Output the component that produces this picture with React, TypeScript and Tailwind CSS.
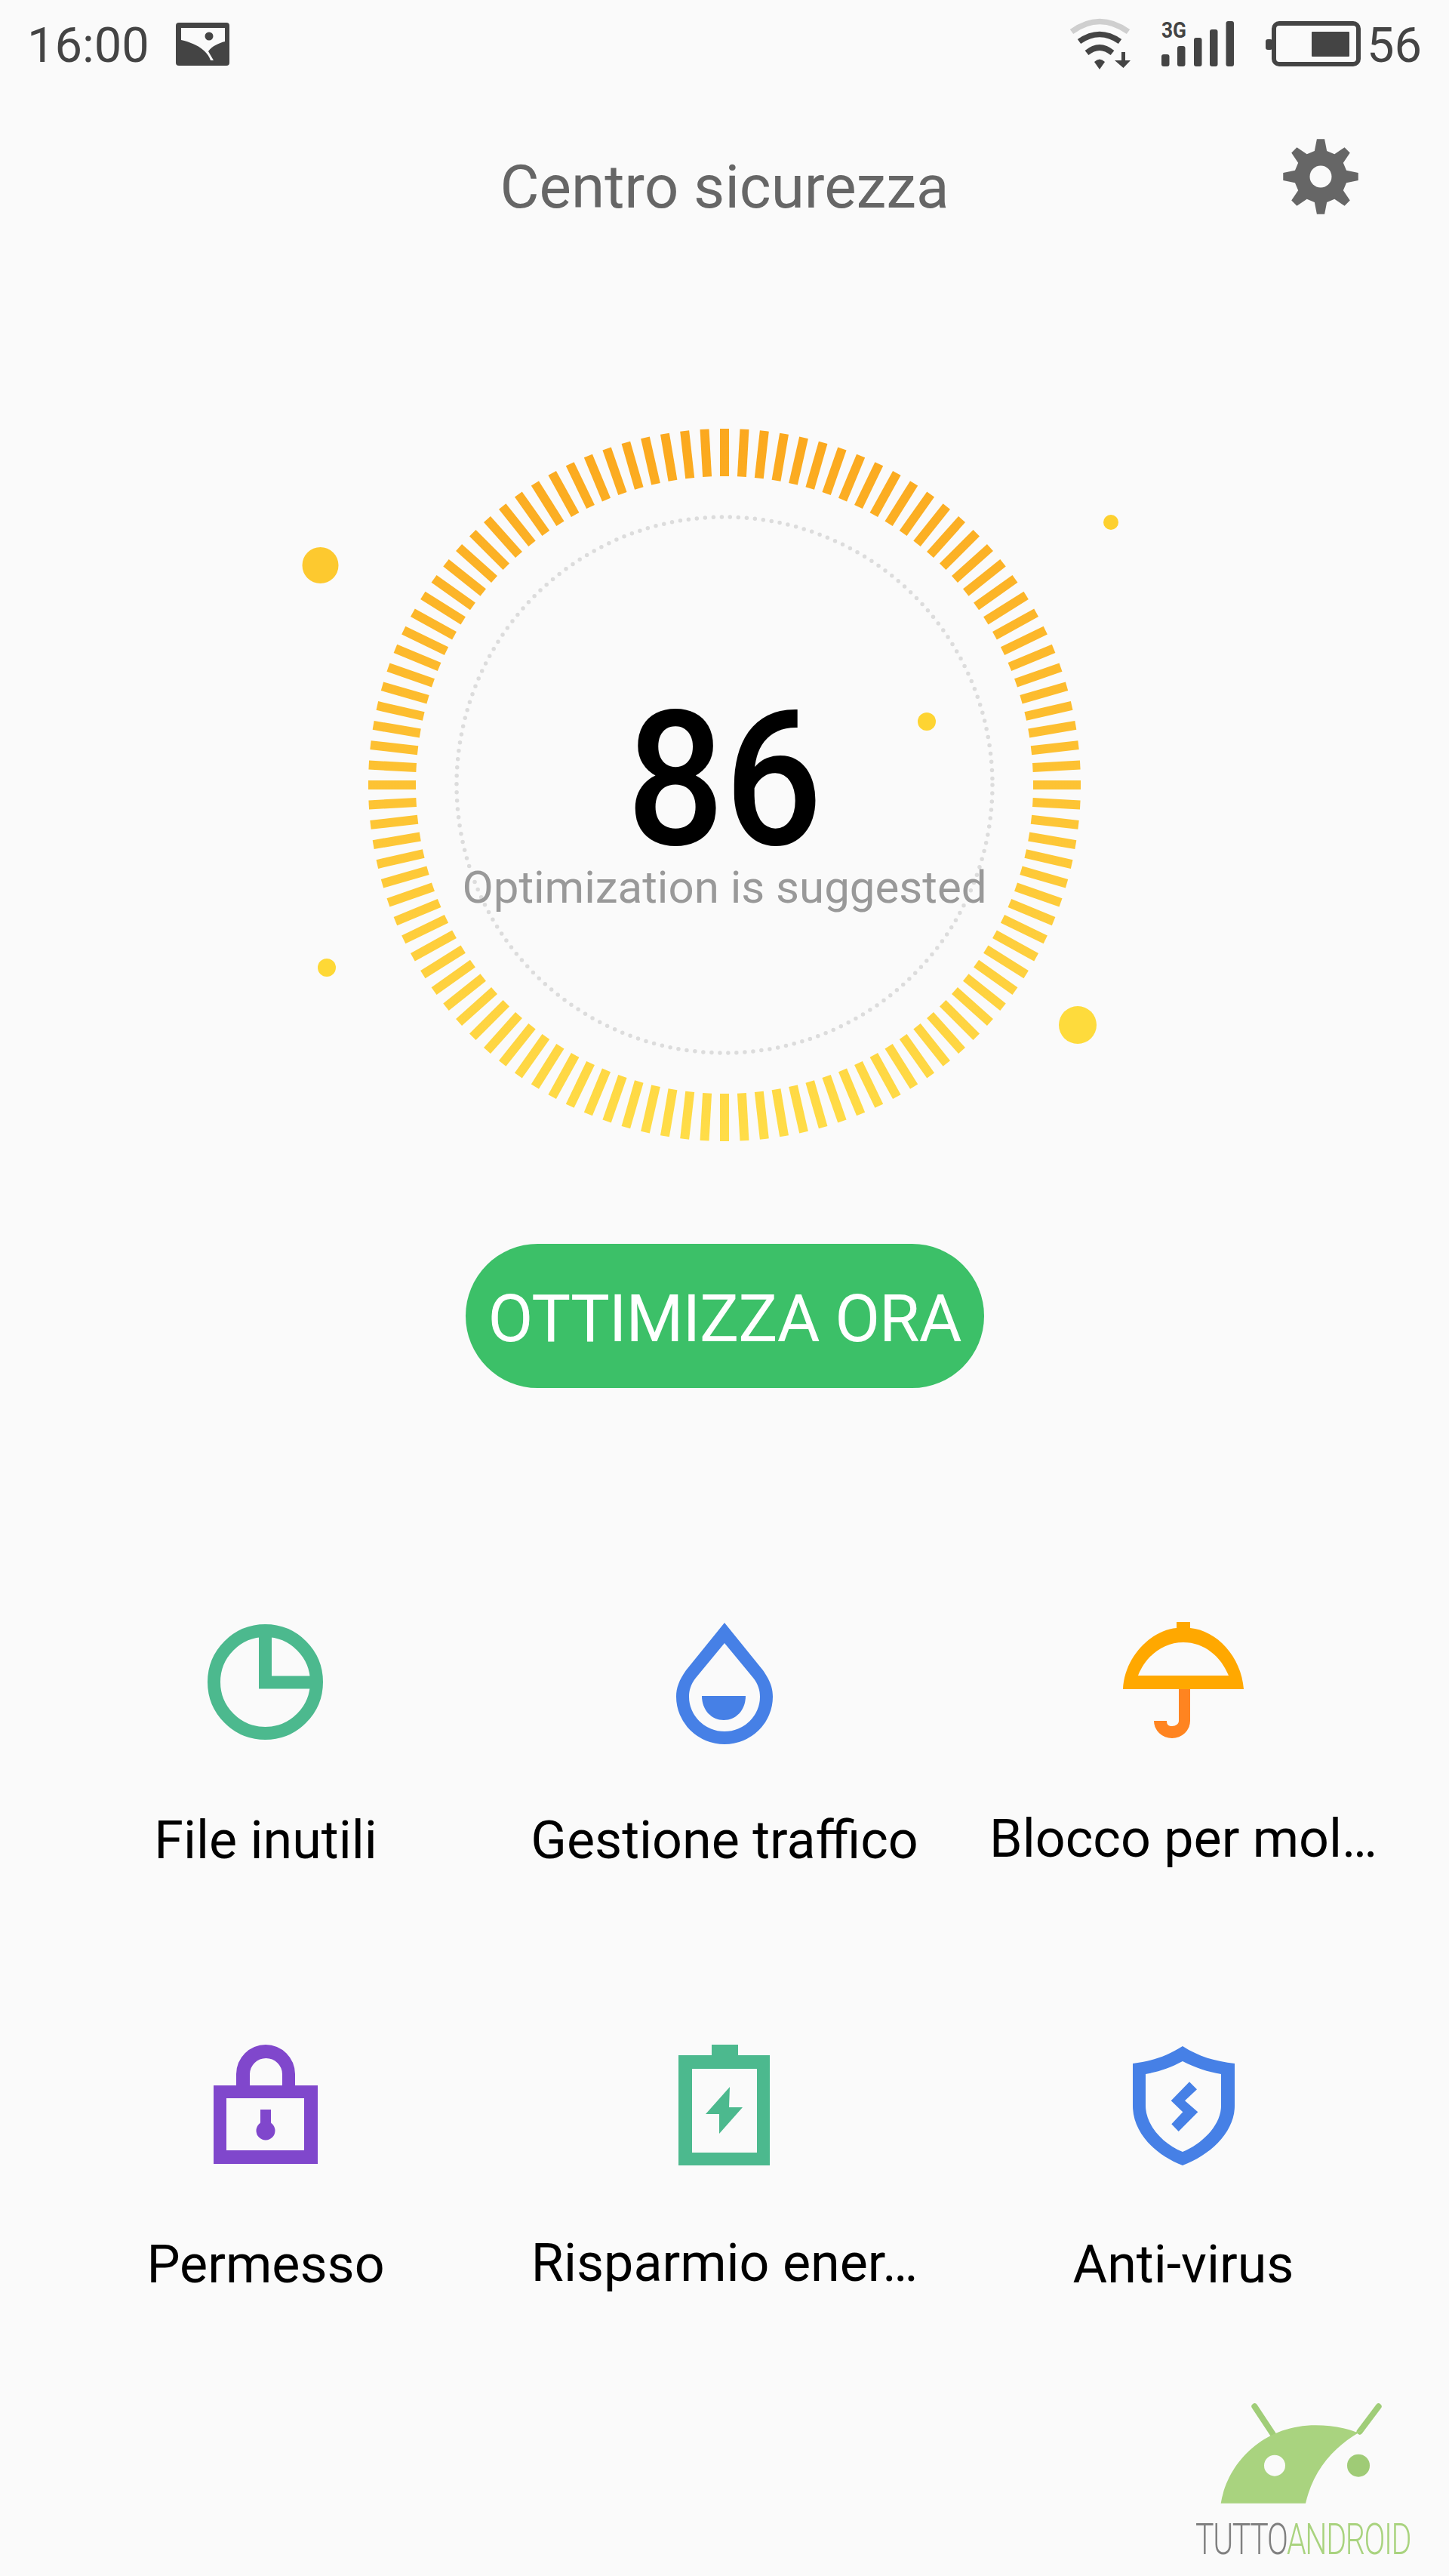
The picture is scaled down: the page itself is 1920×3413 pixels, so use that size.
import React from "react";

const ROBOTO = "font-['Roboto',sans-serif]";

function Ticks() {
  const items = [];
  for (let i = 0; i < 112; i++) {
    const a = (i * 2 * Math.PI) / 112;
    const c = Math.cos(a);
    const s = Math.sin(a);
    items.push(
      <line key={i} x1={960 + 409 * s} y1={1040 - 409 * c} x2={960 + 472 * s} y2={1040 - 472 * c} />
    );
  }
  return (
    <g stroke="url(#ringGrad)" strokeWidth={12}>
      {items}
    </g>
  );
}

function gearPath() {
  const cx = 50, cy = 50, n = 8;
  const pts: string[] = [];
  for (let i = 0; i < n; i++) {
    const a = (i * 2 * Math.PI) / n - Math.PI / 2;
    const d = (2 * Math.PI) / n;
    const add = (r: number, t: number) =>
      pts.push(`${(cx + r * Math.cos(a + t * d)).toFixed(2)} ${(cy + r * Math.sin(a + t * d)).toFixed(2)}`);
    add(35, -0.3);
    add(50, -0.13);
    add(50, 0.13);
    add(35, 0.3);
  }
  return "M" + pts.join("L") + "Z";
}

function Ring() {
  return (
    <svg className="block w-[1920px] h-[1000px]" viewBox="0 540 1920 1000">
      <defs>
        <linearGradient id="ringGrad" gradientUnits="userSpaceOnUse" x1="960" y1="568" x2="960" y2="1512">
          <stop offset="0" stopColor="#fba81e" />
          <stop offset="1" stopColor="#ffdd48" />
        </linearGradient>
      </defs>
      <Ticks />
      <circle cx="960" cy="1040" r="355" fill="none" stroke="#dcdcdc" strokeWidth="5.500" strokeLinecap="round" strokeDasharray="0 11.05" />
      <circle cx="424.5" cy="749" r="24" fill="#fdc92f" />
      <circle cx="1472" cy="692" r="10" fill="#fdd02f" />
      <circle cx="1228" cy="956" r="12" fill="#fed432" />
      <circle cx="433" cy="1282" r="12" fill="#fed836" />
      <circle cx="1428" cy="1358" r="25" fill="#fedb3c" />
    </svg>
  );
}

const G1 = "#4cb98e";
const BLUE = "#4680e6";

function IconFile() {
  return (
    <svg className="w-[180px] h-[180px]" viewBox="262 2140 180 180">
      <circle cx="351.5" cy="2228.5" r="68" fill="none" stroke={G1} strokeWidth="17" />
      <path d="M351.5 2156V2229H424" fill="none" stroke={G1} strokeWidth="17" />
    </svg>
  );
}
function IconDrop() {
  return (
    <svg className="w-[180px] h-[180px]" viewBox="870 2140 180 180">
      <path
        fillRule="evenodd"
        fill={BLUE}
        d="M960 2150L909 2213C900 2226 896 2236 896 2248A64 63 0 0 0 1024 2248C1024 2236 1020 2226 1011 2213ZM960 2177L922 2223C915 2232 913 2240 913 2248A47 46 0 0 0 1007 2248C1007 2240 1005 2232 998 2223Z"
      />
      <path fill={BLUE} d="M930 2247H988C988 2266 975 2279 959 2279C943 2279 930 2266 930 2247Z" />
    </svg>
  );
}
function IconUmbrella() {
  return (
    <svg className="w-[180px] h-[180px]" viewBox="1478 2140 180 180">
      <path
        fill="#ff8420"
        d="M1562 2238H1577V2280A24 23 0 0 1 1529 2280H1546C1546 2286 1549 2287 1553 2287C1558 2287 1562 2284 1562 2280Z"
      />
      <path
        fillRule="evenodd"
        fill="#ffa800"
        d="M1488 2238C1490 2195 1525 2160 1559 2157V2149H1577V2157C1612 2160 1645 2195 1648 2238ZM1508 2220C1518 2195 1540 2176 1568 2176C1596 2176 1618 2195 1628 2220Z"
      />
    </svg>
  );
}
function IconLock() {
  return (
    <svg className="w-[180px] h-[180px]" viewBox="262 2702 180 180">
      <path
        fillRule="evenodd"
        fill="#8047cc"
        d="M283 2763H313V2748A39 39 0 0 1 391 2748V2763H421V2867H283ZM331 2763H374V2748A21.500 21 0 0 0 331 2748ZM300 2780V2849H403V2780Z"
      />
      <rect x="345" y="2795" width="14" height="20" fill="#8047cc" />
      <circle cx="352" cy="2823" r="12.500" fill="#8047cc" />
    </svg>
  );
}
function IconBattery() {
  return (
    <svg className="w-[180px] h-[180px]" viewBox="870 2702 180 180">
      <path
        fillRule="evenodd"
        fill={G1}
        d="M899 2723H943V2709H978V2723H1020V2869H899ZM917 2741V2852H1003V2741Z"
      />
      <path fill={G1} d="M967 2765L935 2801H953V2827L984 2792H966Z" />
    </svg>
  );
}
function IconShield() {
  return (
    <svg className="w-[180px] h-[180px]" viewBox="1478 2702 180 180">
      <path
        fillRule="evenodd"
        fill={BLUE}
        d="M1567 2711C1545 2725 1525 2731 1501 2734V2790C1501 2825 1530 2855 1567 2869C1604 2855 1636 2825 1636 2790V2734C1610 2731 1589 2725 1567 2711ZM1567 2731C1550 2740 1535 2745 1518 2748V2790C1518 2815 1540 2840 1567 2851C1594 2840 1618 2815 1618 2790V2748C1600 2745 1585 2740 1567 2731Z"
      />
      <path
        fill={BLUE}
        d="M1576 2758.300L1586 2768.300L1570 2783.300L1587.300 2798.300L1561.700 2824L1552.300 2814.300L1567.300 2798.300L1551.700 2783.300Z"
      />
    </svg>
  );
}

function Feature({ icon, label, raised }: { icon: React.ReactNode; label: string; raised?: boolean }) {
  return (
    <div className="flex flex-col items-center h-[562px]">
      {icon}
      <div
        className={`${raised ? "mt-[76px]" : "mt-[78px]"} leading-[80px] text-[70px] text-black whitespace-nowrap ${ROBOTO}`}
      >
        {label}
      </div>
    </div>
  );
}

export default function App() {
  return (
    <div className={`relative w-[1920px] h-[3413px] bg-[#fafafa] overflow-hidden ${ROBOTO}`}>
      {/* status bar */}
      <div className="flex justify-between h-[100px]">
        <div className="flex pl-[36px]">
          <div className="w-[197px] mt-[10px] leading-[100px] text-[65px] text-[#444]">16:00</div>
          <svg className="w-[71px] h-[100px]" viewBox="233 0 71 100">
            <rect x="233" y="30" width="71" height="57" rx="4" fill="#444" />
            <path
              fill="#fafafa"
              d="M240 37H298V55C290 57 281 61 276 68L283 80H279C275 68 262 58 240 53Z"
            />
            <circle cx="277" cy="48" r="5.500" fill="#444" />
          </svg>
        </div>
        <div className="flex">
          <svg className="w-[84px] h-[100px] mr-[38px]" viewBox="1416 0 84 100">
            <path d="M1420 42Q1457 15 1495 42" fill="none" stroke="#cfcfcf" strokeWidth="7.500" />
            <path d="M1430 55Q1457 36 1484 55" fill="none" stroke="#444" strokeWidth="7.500" />
            <path d="M1440 70Q1457 56 1474 70" fill="none" stroke="#444" strokeWidth="7.500" />
            <path d="M1450 82Q1457 75 1464 82L1457 92Z" fill="#444" />
            <path d="M1486 69H1491V80H1498L1488.500 90L1477 80H1486Z" fill="#444" />
          </svg>
          <svg className="w-[98px] h-[100px]" viewBox="1538 0 98 100">
            <text x="1539" y="50" fontSize="30" fontWeight="700" fill="#444" textLength="33" lengthAdjust="spacingAndGlyphs" fontFamily="Roboto, sans-serif">3G</text>
            <g fill="#444">
              <rect x="1539" y="72" width="10.500" height="16" rx="3" />
              <rect x="1560" y="61" width="10.500" height="27" rx="3" />
              <rect x="1582" y="50" width="10.500" height="38" rx="3" />
              <rect x="1603" y="39" width="10.500" height="49" rx="3" />
              <rect x="1624.500" y="28" width="10.500" height="60" rx="3" />
            </g>
          </svg>
          <svg className="w-[127px] h-[100px] ml-[40px]" viewBox="1676 0 127 100">
            <rect x="1688" y="31" width="112" height="54" rx="7" fill="none" stroke="#444" strokeWidth="6" />
            <rect x="1677" y="52" width="9" height="14" rx="3" fill="#444" />
            <rect x="1738" y="42" width="50" height="33" rx="1" fill="#444" />
          </svg>
          <div className="w-[117px] pl-[8px] mt-[10px] leading-[100px] text-[65px] text-[#444]">56</div>
        </div>
      </div>

      {/* title */}
      <div className="grid grid-cols-[1fr_auto_1fr] h-[240px]">
        <div />
        <div className="mt-[98px] leading-[100px] text-[80px] text-[#666] whitespace-nowrap">Centro sicurezza</div>
        <div className="flex justify-end pr-[120px] pt-[84px]">
          <svg className="w-[100px] h-[100px]" viewBox="0 0 100 100">
            <path d={gearPath()} fill="#666" />
            <circle cx="50" cy="50" r="14.500" fill="#fafafa" />
          </svg>
        </div>
      </div>

      {/* score ring */}
      <div className="relative mt-[200px] h-[1000px]">
        <Ring />
        <div className="absolute inset-x-0 top-[345px] scale-x-[0.92] text-center leading-[300px] text-[248px] font-medium text-black">86</div>
        <div className="absolute inset-x-0 top-[596px] text-center leading-[80px] text-[60px] text-[#999]">Optimization is suggested</div>
      </div>

      {/* action */}
      <div className="flex justify-center mt-[108px]">
        <div className="w-[687px] h-[191px] pt-[8px] rounded-full bg-[#3cc068] flex items-center justify-center text-white text-[87px] tracking-[-1px] whitespace-nowrap">
          OTTIMIZZA ORA
        </div>
      </div>

      {/* features */}
      <div className="grid grid-cols-3 px-[48px] mt-[301px]">
        <Feature icon={<IconFile />} label="File inutili" />
        <Feature icon={<IconDrop />} label="Gestione traffico" />
        <Feature icon={<IconUmbrella />} label="Blocco per mol…" raised />
        <Feature icon={<IconLock />} label="Permesso" />
        <Feature icon={<IconBattery />} label="Risparmio ener…" raised />
        <Feature icon={<IconShield />} label="Anti-virus" />
      </div>

      {/* watermark */}
      <div className="absolute left-[1540px] top-[3150px] w-[380px] h-[263px]">
        <svg className="block w-[380px] h-[263px]" viewBox="0 0 1140 789">
          <path d="M367 115L440 225M860 115L785 215" stroke="#a0cd78" strokeWidth="24" strokeLinecap="round" fill="none" />
          <path
            fill="#a9d37f"
            fillRule="evenodd"
            d="M233 500C260 340 400 190 610 190C670 190 730 200 770 217L808 205C680 270 600 370 570 500ZM489 350A42 42 0 1 0 405 350A42 42 0 1 0 489 350Z"
          />
          <circle cx="780" cy="350" r="45" fill="#9fcb76" />
        </svg>
        <div className="absolute left-[44px] top-[184px] origin-left scale-x-[0.71] leading-[60px] text-[58px] font-light whitespace-nowrap tracking-[-2px]">
          <span className="text-[#808080]">TUTTO</span>
          <span className="text-[#a9d37f]">ANDROID</span>
        </div>
      </div>
    </div>
  );
}
